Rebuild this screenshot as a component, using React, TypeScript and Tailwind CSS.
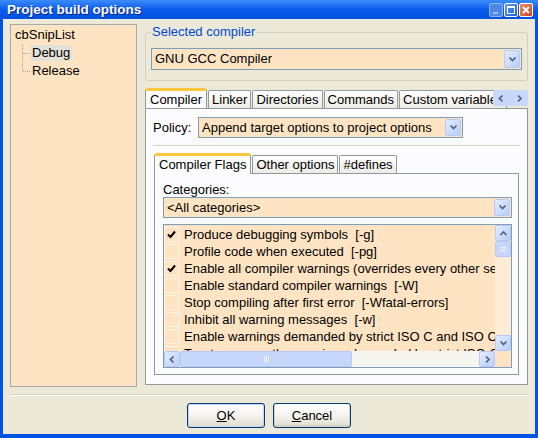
import React from 'react';

type Dir = 'down' | 'up' | 'left' | 'right';

const arrowPaths: Record<Dir, string> = {
  down: 'M1.5 2.5 L4.5 5.5 L7.5 2.5',
  up: 'M1.5 6 L4.5 3 L7.5 6',
  left: 'M5.5 1.5 L2.5 4.5 L5.5 7.5',
  right: 'M3 1.5 L6 4.5 L3 7.5',
};

function Arrow({ dir = 'down' }: { dir?: Dir }) {
  return (
    <svg width="9" height="9" viewBox="0 0 9 9">
      <path d={arrowPaths[dir]} fill="none" stroke="#4D6185" strokeWidth="1.7" />
    </svg>
  );
}

function ScrollButton({ dir, className = '' }: { dir: Dir; className?: string }) {
  return (
    <div
      className={`flex shrink-0 items-center justify-center rounded-[2px] border border-[#B7CAF5] bg-gradient-to-br from-[#E3ECFE] to-[#B9CEF8] ${className}`}
    >
      <Arrow dir={dir} />
    </div>
  );
}

function Combo({ value, className = '' }: { value: string; className?: string }) {
  return (
    <div className={`flex shrink-0 items-stretch border border-[#7F9DB9] bg-[#FFE4C4] ${className}`}>
      <div className="flex-1 truncate pl-[3px] leading-[19px]">{value}</div>
      <ScrollButton dir="down" className="m-[1px] w-[16px]" />
    </div>
  );
}

function Tab({ label, active }: { label: string; active?: boolean }) {
  if (active) {
    return (
      <div className="relative z-10 -mb-px h-[21px] shrink-0 rounded-t-[3px] border border-b-0 border-[#919B9C] border-t-[3px] border-t-[#FFC83C] bg-[#FCFCFE] px-[4px] leading-[17px]">
        {label}
      </div>
    );
  }
  return (
    <div className="h-[18px] shrink-0 rounded-t-[2px] border border-b-0 border-[#919B9C] bg-gradient-to-b from-white to-[#ECEBE6] px-[3px] leading-[17px]">
      {label}
    </div>
  );
}

function TreeChild({ label, selected, last }: { label: string; selected?: boolean; last?: boolean }) {
  return (
    <div className="flex h-[18px] items-center">
      <svg width="15" height="18" viewBox="0 0 15 18" className="shrink-0">
        <path
          d={last ? 'M7.5 0 V9.5 H15' : 'M7.5 0 V18 M7.5 9.5 H15'}
          fill="none"
          stroke="#A0A0A0"
          strokeDasharray="1 1"
        />
      </svg>
      <span className={`px-[2px] leading-[16px] ${selected ? 'bg-[#E4E1D8]' : ''}`}>{label}</span>
    </div>
  );
}

function Check() {
  return (
    <svg width="13" height="13" viewBox="0 0 13 13">
      <path d="M3 6.5 L5.5 9 L10 3.5" fill="none" stroke="#000" strokeWidth="2" />
    </svg>
  );
}

const flags = [
  { on: true, text: 'Produce debugging symbols  [-g]' },
  { on: false, text: 'Profile code when executed  [-pg]' },
  { on: true, text: 'Enable all compiler warnings (overrides every other setting)  [-Wall]' },
  { on: false, text: 'Enable standard compiler warnings  [-W]' },
  { on: false, text: 'Stop compiling after first error  [-Wfatal-errors]' },
  { on: false, text: 'Inhibit all warning messages  [-w]' },
  { on: false, text: 'Enable warnings demanded by strict ISO C and ISO C++  [-pedantic]' },
  { on: false, text: 'Treat as errors the warnings demanded by strict ISO C and ISO C++  [-pedantic-errors]' },
];

function XpButton({ hot, rest, primary }: { hot: string; rest: string; primary?: boolean }) {
  return (
    <div
      className={`flex h-[25px] w-[78px] items-center justify-center rounded-[3px] border border-[#003C74] bg-gradient-to-b from-white via-[#F4F3EE] to-[#DEDBCD] ${
        primary ? 'shadow-[inset_0_0_0_1px_#C4D5F6]' : 'shadow-[inset_0_-1px_0_1px_#D6D0C0]'
      }`}
    >
      <span>
        <span className="underline">{hot}</span>
        {rest}
      </span>
    </div>
  );
}

export default function App() {
  return (
    <div className="flex h-[438px] w-[538px] flex-col bg-[#0054E3] font-['Liberation_Sans',Arial,sans-serif] text-[13px] text-black">
      {/* Title bar */}
      <div className="flex h-[19px] shrink-0 items-center bg-gradient-to-b from-[#3B8CF8] via-[#0A5CEC] to-[#0052E0] pl-[7px] pr-[5px]">
        <div className="flex-1 text-[13.5px] font-bold leading-[16px] text-white [text-shadow:1px_1px_0_#0A1E8C]">
          Project build options
        </div>
        <div className="flex gap-[1px]">
          <div className="flex h-[14px] w-[14px] items-end justify-start rounded-[2px] border border-[#8FB3F4] bg-[#4F87E8] pb-[2px] pl-[3px]">
            <div className="h-[2px] w-[5px] bg-[#9DBDF5]" />
          </div>
          <div className="flex h-[14px] w-[14px] items-center justify-center rounded-[2px] border border-white bg-gradient-to-br from-[#5D9CF8] to-[#1C5FE0]">
            <div className="h-[8px] w-[8px] border border-t-2 border-white" />
          </div>
          <div className="flex h-[14px] w-[14px] items-center justify-center rounded-[2px] border border-white bg-gradient-to-br from-[#E98B6B] to-[#D24219]">
            <svg width="8" height="8" viewBox="0 0 8 8">
              <path d="M1 1 L7 7 M7 1 L1 7" stroke="#fff" strokeWidth="1.8" />
            </svg>
          </div>
        </div>
      </div>

      {/* Body */}
      <div className="mx-[3px] mb-[4px] flex min-h-0 flex-1 flex-col bg-[#ECE9D8]">
        <div className="flex h-[368px] shrink-0 gap-[8px] px-[7px] pt-[5px]">
          {/* Tree */}
          <div className="w-[127px] shrink-0 border border-[#A7ABB0] bg-[#FFE4C4] pl-[4px] pt-[1px]">
            <div className="leading-[18px]">cbSnipList</div>
            <TreeChild label="Debug" selected />
            <TreeChild label="Release" last />
          </div>

          {/* Right column */}
          <div className="flex min-h-0 w-[383px] flex-col pb-[2px]">
            <fieldset className="shrink-0 rounded-[3px] border border-[#D0D0BF] px-[5px] pb-[10px]">
              <legend className="px-[1px] leading-[16px] text-[#0046D5]">Selected compiler</legend>
              <Combo value="GNU GCC Compiler" className="mt-[8px] h-[22px]" />
            </fieldset>

            {/* Outer tabs */}
            <div className="relative mt-[7px] flex h-[20px] shrink-0 items-end gap-[1px] overflow-hidden">
              <Tab label="Compiler" active />
              <Tab label="Linker" />
              <Tab label="Directories" />
              <Tab label="Commands" />
              <Tab label="Custom variables" />
              <div className="absolute right-0 top-[2px] flex h-[16px] w-[35px] items-center justify-around rounded-[2px] bg-[#C7D8FC]">
                <Arrow dir="left" />
                <Arrow dir="right" />
              </div>
            </div>

            <div className="flex min-h-0 flex-1 flex-col border border-[#919B9C] bg-[#FCFCFE]">
              <div className="flex shrink-0 items-center pl-[7px] pt-[8px]">
                <span className="w-[45px]">Policy:</span>
                <Combo value="Append target options to project options" className="h-[21px] w-[265px]" />
              </div>
              <div className="mx-[7px] mt-[7px] h-[2px] shrink-0 border-b border-t border-b-white border-t-[#D0D0BF]" />

              {/* Inner tabs */}
              <div className="mx-[8px] mt-[6px] flex min-h-0 flex-1 flex-col pb-[9px]">
                <div className="flex h-[20px] shrink-0 items-end gap-[1px]">
                  <Tab label="Compiler Flags" active />
                  <Tab label="Other options" />
                  <Tab label="#defines" />
                </div>
                <div className="flex min-h-0 flex-1 flex-col border border-[#919B9C] bg-[#FCFCFE] pb-[6px] pl-[8px] pr-[6px] pt-[8px]">
                  <div className="shrink-0 leading-[15px]">Categories:</div>
                  <Combo value="<All categories>" className="h-[21px]" />

                  {/* Flags list */}
                  <div className="mt-[6px] flex min-h-0 flex-1 flex-col border border-[#7F9DB9] bg-[#FFE4C4]">
                    <div className="flex min-h-0 flex-1 overflow-hidden">
                      <div className="min-h-0 flex-1 overflow-hidden pt-[1px]">
                        {flags.map((f, i) => (
                          <div key={i} className="flex h-[17px] items-center gap-[5px] whitespace-pre">
                            <div className="flex h-[15px] w-[15px] shrink-0 items-center justify-center border border-[#FFF3E4]">
                              {f.on && <Check />}
                            </div>
                            <span className="leading-[17px]">{f.text}</span>
                          </div>
                        ))}
                      </div>
                      <div className="flex w-[16px] shrink-0 flex-col bg-[#FDEDD8]">
                        <ScrollButton dir="up" className="h-[16px]" />
                        <div className="flex h-[16px] shrink-0 flex-col items-center justify-center gap-[1px] rounded-[2px] border border-[#B7CAF5] bg-[#C6D7FB]">
                          <div className="h-px w-[6px] bg-[#EEF4FE]" />
                          <div className="h-px w-[6px] bg-[#EEF4FE]" />
                          <div className="h-px w-[6px] bg-[#EEF4FE]" />
                        </div>
                        <div className="flex-1" />
                        <ScrollButton dir="down" className="h-[16px]" />
                      </div>
                    </div>
                    <div className="flex h-[16px] shrink-0">
                      <div className="flex flex-1 bg-[#F7F5EF]">
                        <ScrollButton dir="left" className="w-[16px]" />
                        <div className="flex w-[172px] items-center justify-center gap-[1px] rounded-[2px] border border-[#B7CAF5] bg-[#C6D7FB]">
                          <div className="h-[6px] w-px bg-[#EEF4FE]" />
                          <div className="h-[6px] w-px bg-[#EEF4FE]" />
                          <div className="h-[6px] w-px bg-[#EEF4FE]" />
                        </div>
                        <div className="flex-1" />
                        <ScrollButton dir="right" className="w-[16px]" />
                      </div>
                      <div className="w-[16px] bg-[#FFE4C4]" />
                    </div>
                  </div>
                </div>
              </div>
            </div>
          </div>
        </div>

        <div className="mx-[7px] mt-[7px] h-[2px] shrink-0 border-b border-t border-b-white border-t-[#D0D0BF]" />

        <div className="mt-[7px] flex shrink-0 justify-center gap-[8px]">
          <XpButton hot="O" rest="K" primary />
          <XpButton hot="C" rest="ancel" />
        </div>
      </div>
    </div>
  );
}
